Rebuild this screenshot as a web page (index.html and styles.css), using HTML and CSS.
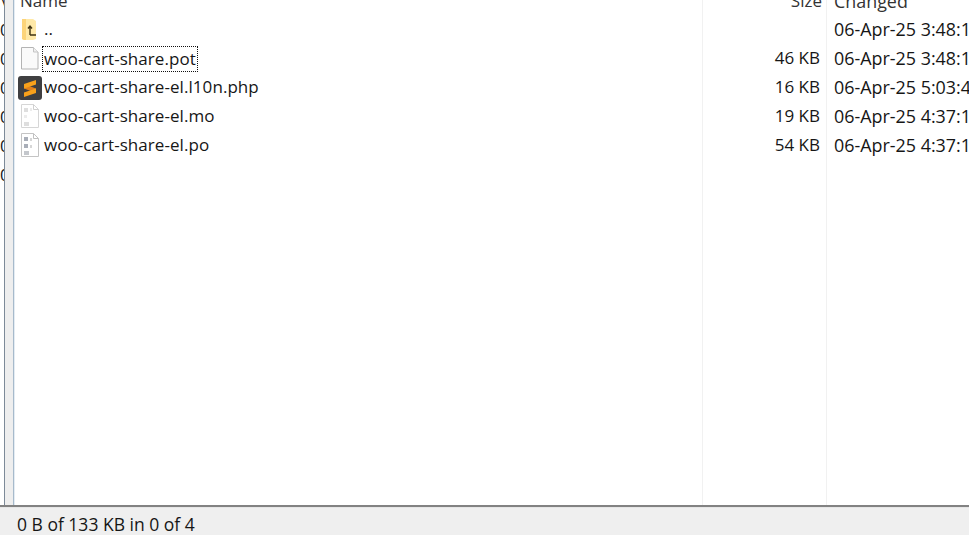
FILE: index.html
```html
<!DOCTYPE html>
<html lang="en">
<head>
<meta charset="utf-8">
<title>woo-cart-share</title>
<link rel="stylesheet" href="styles.css">
</head>
<body>
<div class="window">
  <div class="main">
    <div class="remote-edge">
      <div class="clipped">
        <span class="top">\</span><span>0</span><span>0</span><span>0</span><span>0</span><span>0</span><span>0</span>
      </div>
      <div class="edge-line"></div>
    </div>
    <div class="splitter"></div>
    <div class="panel">
      <div class="list">
        <div class="row header">
          <div class="c-name"><span class="hname">Name</span></div>
          <div class="c-size head-size">Size</div>
          <div class="c-date">Changed</div>
        </div>
        <div class="row">
          <div class="c-name">
            <svg class="icon" viewBox="0 0 24 24"><path d="M4 1h11l3 2v18l-3 1H6l-2-1z" fill="#ffe9a8"/><path d="M4 1h4v21H6l-2-1z" fill="#fcd47a"/><path d="M12 8.500v8.500M10 10.500l2-2.500 2 2.500M12 17h6" fill="none" stroke="#3f3212" stroke-width="1.400"/></svg>
            <span class="fname">..</span>
          </div>
          <div class="c-size"></div>
          <div class="c-date">06-Apr-25 3:48:1</div>
        </div>
        <div class="row">
          <div class="c-name">
            <svg class="icon" viewBox="0 0 24 24"><path d="M3.500 .5h12l4.500 4.500v17H3.500z" fill="#fafafa" stroke="#b4b4b4"/><path d="M15.500 .5V5H20" fill="#f0f0f0" stroke="#c4c4c4"/></svg>
            <span class="fname focus">woo-cart-share.pot</span>
          </div>
          <div class="c-size">46 KB</div>
          <div class="c-date">06-Apr-25 3:48:1</div>
        </div>
        <div class="row">
          <div class="c-name">
            <svg class="icon" viewBox="0 0 24 24"><rect width="24" height="24" rx="3" fill="#3f3f41"/><path d="M6 8v4.500l12 4.500v-4.500z" fill="#e0801c"/><path d="M18 4 6 8v4.500l12-4z" fill="#f9a11b"/><path d="M18 12.500v4.500L6 21v-4.500z" fill="#f9a11b"/></svg>
            <span class="fname">woo-cart-share-el.l10n.php</span>
          </div>
          <div class="c-size">16 KB</div>
          <div class="c-date">06-Apr-25 5:03:4</div>
        </div>
        <div class="row">
          <div class="c-name">
            <svg class="icon" viewBox="0 0 24 24"><path d="M3.500 -.5h12l5 5v18h-17z" fill="#fff" stroke="#d6d6d6"/><path d="M15.500 -.5v5h5" fill="none" stroke="#d0d0d0"/><path d="M6 3h4v4H6zM6 17h5v4H6z" fill="#dedede"/><path d="M6 10h3v3H6zM12 3h2v3h-2z" fill="#ececec"/></svg>
            <span class="fname">woo-cart-share-el.mo</span>
          </div>
          <div class="c-size">19 KB</div>
          <div class="c-date">06-Apr-25 4:37:1</div>
        </div>
        <div class="row">
          <div class="c-name">
            <svg class="icon" viewBox="0 0 24 24"><path d="M3.500 -.5h12l5 5v18h-17z" fill="#fff" stroke="#c4c4c4"/><path d="M15.500 -.5v5h5" fill="none" stroke="#c0c0c0"/><path d="M6 3h4v4H6zM6 10h4v4H6z" fill="#a9aeb8"/><path d="M6 17h5v4H6z" fill="#c4c7cc"/><path d="M12 4h2v3h-2zM12 11h2v3h-2z" fill="#d6d6d6"/></svg>
            <span class="fname">woo-cart-share-el.po</span>
          </div>
          <div class="c-size">54 KB</div>
          <div class="c-date">06-Apr-25 4:37:1</div>
        </div>
        <div class="guides"><div class="c-name"></div><div class="c-size"></div><div class="c-date"></div></div>
      </div>
    </div>
  </div>
  <div class="status">0 B of 133 KB in 0 of 4</div>
</div>
</body>
</html>
```
FILE: styles.css
```css
* { box-sizing: border-box; }
html, body { margin: 0; height: 100%; overflow: hidden; background: #fff; }
body { font-family: "Open Sans", "Noto Sans", sans-serif; font-size: 17px; color: #161616; }
.window { width: 969px; height: 535px; display: flex; flex-direction: column; }
.main { flex: 1; min-height: 0; display: flex; border-bottom: 2px solid #828282; }
.remote-edge { width: 5px; display: flex; overflow: hidden; background: #fff; }
.clipped { width: 4px; display: flex; flex-direction: column; }
.clipped span { flex: none; height: 29px; line-height: 29px; }
.clipped .top { height: 15px; line-height: 2px; }
.edge-line { width: 1px; background: #7d8a98; }
.splitter { width: 8px; background: #eeeeee; }
.panel { flex: 1; border-left: 1px solid #a7bacb; box-shadow: inset 1px 0 0 #e4ecf3; overflow: hidden; }
.list { height: 100%; display: flex; flex-direction: column; }
.row { display: flex; height: 29px; line-height: 28px; flex: none; }
.header { height: 15px; line-height: 2px; color: #333; }
.header .c-name { align-items: flex-start; }
.c-name { flex: none; width: 688px; display: flex; align-items: center; padding-left: 4px; }
.c-size { flex: none; width: 125px; text-align: right; padding-right: 6px; border-left: 1px solid #f1f1f1; border-right: 1px solid #f1f1f1; }
.c-size.head-size { padding-right: 4px; }
.c-date { flex: 1; min-width: 0; padding-left: 7px; white-space: nowrap; font-size: 17.9px; line-height: 28px; }
.hname { padding-left: 2px; }
.icon { width: 24px; height: 24px; flex: none; margin: 0 2px 0 0; overflow: visible; }
.fname { white-space: nowrap; letter-spacing: .06px; line-height: 27px; margin-top: -2px; }
.focus { outline: 1px dotted #111; outline-offset: -1px; line-height: 26px; padding: 0 2px; margin: 0 0 0 -2px; }
.header .c-date { line-height: 2px; }
.guides { flex: 1; display: flex; }
.status { height: 28px; background: #efefef; border-top: 1px solid #e6e6e6; padding-left: 17px; line-height: 33px; font-size: 17.5px; }
```
